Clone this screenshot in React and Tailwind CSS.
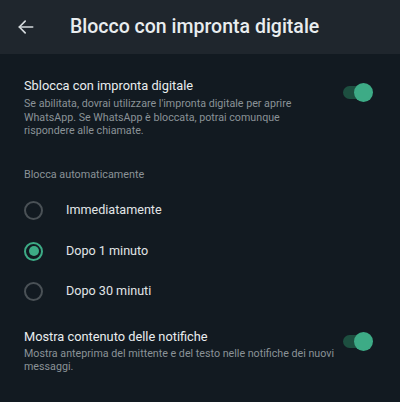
import React, { useState } from 'react';

const Toggle = ({ on, onClick }) => (
  <button onClick={onClick} className="relative w-[30px] h-[22px] shrink-0 flex items-center">
    <span className={`absolute left-0 right-[2px] h-[13px] rounded-full ${on ? 'bg-[#1d4f40]' : 'bg-[#3b4a54]'}`} />
    <span
      className={`absolute w-[19px] h-[19px] rounded-full ${on ? 'right-0 bg-[#3dab86]' : 'left-0 bg-[#a0aab0]'}`}
    />
  </button>
);

const Radio = ({ checked }) => (
  <span
    className={`w-[19px] h-[19px] rounded-full border-2 flex items-center justify-center shrink-0 ${
      checked ? 'border-[#3dab86]' : 'border-[#4a5156]'
    }`}
  >
    {checked && <span className="w-[10px] h-[10px] rounded-full bg-[#3dab86]" />}
  </span>
);

export default function App() {
  const [fingerprint, setFingerprint] = useState(true);
  const [notifications, setNotifications] = useState(true);
  const [lockAfter, setLockAfter] = useState('1');

  const options = [
    { id: '0', label: 'Immediatamente' },
    { id: '1', label: 'Dopo 1 minuto' },
    { id: '30', label: 'Dopo 30 minuti' },
  ];

  return (
    <div className="w-[400px] h-[402px] bg-[#121a21] text-[#e9edef] font-['Roboto',sans-serif] overflow-hidden">
      {/* Header */}
      <div className="h-[54px] bg-[#1f262d] flex items-center">
        <button className="w-[54px] h-[54px] flex items-center justify-center text-[#d5dadd] -ml-[1px]">
          <svg width="20" height="20" viewBox="0 0 24 24" fill="none" stroke="currentColor" strokeWidth="2" strokeLinecap="round" strokeLinejoin="round">
            <path d="M20 12H4" />
            <path d="M11 5l-7 7 7 7" />
          </svg>
        </button>
        <h1 className="ml-[17px] text-[19.5px] font-medium text-[#e9edef]">Blocco con impronta digitale</h1>
      </div>

      {/* Fingerprint unlock */}
      <div className="flex items-start pl-[24px] pr-[27px] pt-[23px]">
        <div className="flex-1">
          <div className="text-[12.8px] leading-[18px] text-[#e9edef]">Sblocca con impronta digitale</div>
          <div className="max-w-[290px] text-[10.7px] leading-[13.5px] text-[#8a9297] mt-[2px]">
            Se abilitata, dovrai utilizzare l'impronta digitale per aprire WhatsApp. Se WhatsApp è bloccata, potrai comunque rispondere alle chiamate.
          </div>
        </div>
        <div className="mt-[4px]">
          <Toggle on={fingerprint} onClick={() => setFingerprint(!fingerprint)} />
        </div>
      </div>

      {/* Auto lock */}
      <div className="pl-[24px] mt-[30px] text-[10.8px] leading-[14px] text-[#8a9297]">Blocca automaticamente</div>
      <div className="mt-[9px] flex flex-col">
        {options.map((o) => (
          <button
            key={o.id}
            onClick={() => setLockAfter(o.id)}
            className="h-[40.5px] flex items-center pl-[24px] text-left"
          >
            <Radio checked={lockAfter === o.id} />
            <span className="ml-[23px] text-[12.6px] text-[#e1e5e7]">{o.label}</span>
          </button>
        ))}
      </div>

      {/* Notifications */}
      <div className="flex items-start pl-[24px] pr-[27px] pt-[15.5px]">
        <div className="flex-1">
          <div className="text-[12.8px] leading-[18px] text-[#e9edef]">Mostra contenuto delle notifiche</div>
          <div className="max-w-[316px] text-[10.7px] leading-[13.5px] text-[#8a9297] mt-[1px]">
            Mostra anteprima del mittente e del testo nelle notifiche dei nuovi messaggi.
          </div>
        </div>
        <div className="mt-[3px] -ml-[20px]">
          <Toggle on={notifications} onClick={() => setNotifications(!notifications)} />
        </div>
      </div>
    </div>
  );
}
